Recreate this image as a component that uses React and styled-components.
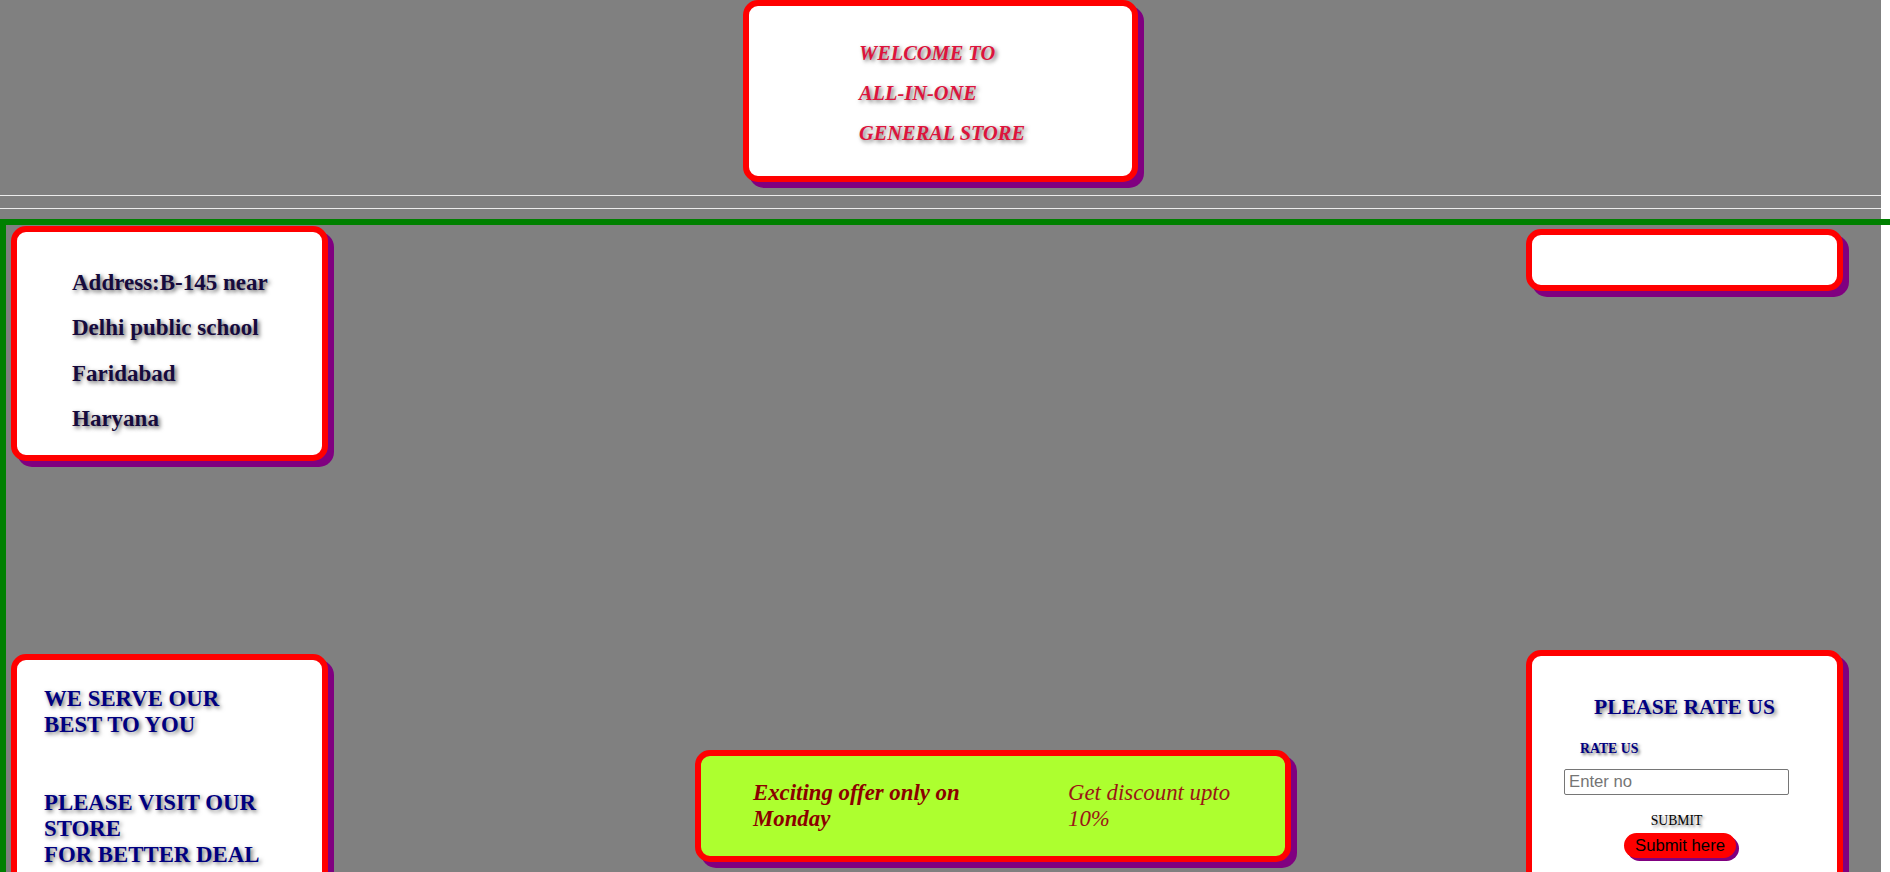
import styled, { createGlobalStyle } from 'styled-components';

const GlobalStyle = createGlobalStyle`
  html, body {
    margin: 0;
    padding: 0;
    overflow: hidden;
    background: #ffffff;
  }
  body {
    font-family: "Liberation Serif", "Times New Roman", serif;
  }
`;

const Page = styled.div`
  width: 1881px;
  min-height: 872px;
  background-color: #808080;
`;

const HeaderWrap = styled.header`
  display: flex;
  justify-content: center;
`;

const Card = styled.div`
  box-sizing: border-box;
  background-color: ${props => props.bg || '#ffffff'};
  border: 6px solid #ff0000;
  border-radius: 15px;
  box-shadow: 6px 6px 0 #800080;
`;

const Banner = styled(Card)`
  width: 395px;
  height: 182px;
  padding: 27px 0 0 110px;
`;

const BannerLine = styled.div`
  font-size: 20.4px;
  line-height: 40px;
  font-weight: bold;
  font-style: italic;
  color: #dc143c;
  text-shadow: 2px 2px 4px #6e6e6e;
`;

const Rule = styled.hr`
  margin: ${props => props.top}px 0 0;
  height: 1px;
  border: none;
  background-color: #ececec;
`;

const Frame = styled.main`
  margin-top: 10px;
  margin-right: -9px;
  border-top: 6px solid #008000;
  border-left: 6px solid #008000;
  padding-bottom: 40px;
`;

const Row = styled.section`
  display: flex;
  align-items: flex-start;
  justify-content: ${props => props.spread ? 'space-between' : 'flex-start'};
  padding: 0 47px 0 5px;
  margin-top: ${props => props.top || 0}px;
`;

const AddressCard = styled(Card)`
  width: 317px;
  height: 235px;
  margin-top: 1px;
  padding: 28px 0 0 55px;
`;

const AddressLine = styled.div`
  font-size: 23px;
  line-height: 45.3px;
  font-weight: bold;
  color: #160b3d;
  text-shadow: 2px 2px 4px #5e5e5e;
`;

const BlankCard = styled(Card)`
  width: 317px;
  height: 62px;
  margin-top: 4px;
`;

const ServeCard = styled(Card)`
  width: 317px;
  height: 280px;
  margin-top: 4px;
  padding: 26px 0 0 27px;
`;

const ServeText = styled.div`
  font-size: 22.8px;
  line-height: 26px;
  font-weight: bold;
  color: #000080;
  text-shadow: 2px 2px 4px #6e6e6e;
  margin-top: ${props => props.top || 0}px;
`;

const OfferCard = styled(Card)`
  width: 596px;
  height: 112px;
  margin-top: 100px;
  margin-left: 367px;
  padding: 24px 0 0 52px;
  display: flex;
`;

const OfferText = styled.div`
  width: ${props => props.width}px;
  font-size: 22.8px;
  line-height: 25.5px;
  font-style: italic;
  font-weight: ${props => props.strong ? 'bold' : 'normal'};
  color: ${props => props.strong ? '#8b0000' : '#9a1616'};
`;

const RateCard = styled(Card)`
  width: 317px;
  height: 280px;
  margin-left: auto;
  padding-top: 39px;
  display: flex;
  flex-direction: column;
  align-items: center;
`;

const RateTitle = styled.h2`
  margin: 0;
  font-size: 21.6px;
  line-height: 25px;
  font-weight: bold;
  color: #000080;
  text-shadow: 2px 2px 4px #6e6e6e;
`;

const RateForm = styled.form`
  width: 225px;
  margin-top: 21px;
  margin-right: 16px;
  display: flex;
  flex-direction: column;
  align-items: center;
`;

const RateLabel = styled.label`
  align-self: flex-start;
  margin-left: 16px;
  font-size: 13.8px;
  line-height: 16px;
  font-weight: bold;
  color: #000080;
  text-shadow: 2px 2px 3px #6e6e6e;
`;

const RateInput = styled.input`
  box-sizing: border-box;
  width: 225px;
  height: 26px;
  margin-top: 12px;
  padding: 0 4px;
  border: 1px solid #767676;
  border-radius: 2px;
  font-family: "Liberation Sans", Arial, sans-serif;
  font-size: 16.7px;
  color: #222;
  outline: none;

  &::placeholder {
    color: #757575;
  }
`;

const SubmitLabel = styled.div`
  margin-top: 18px;
  font-size: 13.7px;
  line-height: 16px;
  color: #000000;
  text-shadow: 2px 2px 3px #8a8a8a;
`;

const SubmitButton = styled.button`
  margin-top: 4px;
  margin-left: 7px;
  width: 112px;
  height: 25px;
  padding: 0;
  border: none;
  border-radius: 13px;
  background-color: #ff0000;
  box-shadow: 3px 3px 0 #800080;
  font-family: "Liberation Sans", Arial, sans-serif;
  font-size: 16.7px;
  color: #000000;
  cursor: pointer;
`;

const addressLines = ['Address:B-145 near', 'Delhi public school', 'Faridabad', 'Haryana'];

export default function App() {
  return (
    <>
      <GlobalStyle />
      <Page>
        <HeaderWrap>
          <Banner>
            <BannerLine>WELCOME TO</BannerLine>
            <BannerLine>ALL-IN-ONE</BannerLine>
            <BannerLine>GENERAL STORE</BannerLine>
          </Banner>
        </HeaderWrap>
        <Rule top={13} />
        <Rule top={12} />
        <Frame>
          <Row spread>
            <AddressCard>
              {addressLines.map(line => (
                <AddressLine key={line}>{line}</AddressLine>
              ))}
            </AddressCard>
            <BlankCard />
          </Row>
          <Row top={189}>
            <ServeCard>
              <ServeText>WE SERVE OUR<br />BEST TO YOU</ServeText>
              <ServeText top={52}>PLEASE VISIT OUR<br />STORE<br />FOR BETTER DEAL</ServeText>
            </ServeCard>
            <OfferCard bg="#adff2f">
              <OfferText strong width={315}>Exciting offer only on<br />Monday</OfferText>
              <OfferText width={200}>Get discount upto<br />10%</OfferText>
            </OfferCard>
            <RateCard>
              <RateTitle>PLEASE RATE US</RateTitle>
              <RateForm onSubmit={e => e.preventDefault()}>
                <RateLabel htmlFor="rate">RATE US</RateLabel>
                <RateInput id="rate" type="text" placeholder="Enter no" />
                <SubmitLabel>SUBMIT</SubmitLabel>
                <SubmitButton type="submit">Submit here</SubmitButton>
              </RateForm>
            </RateCard>
          </Row>
        </Frame>
      </Page>
    </>
  );
}
